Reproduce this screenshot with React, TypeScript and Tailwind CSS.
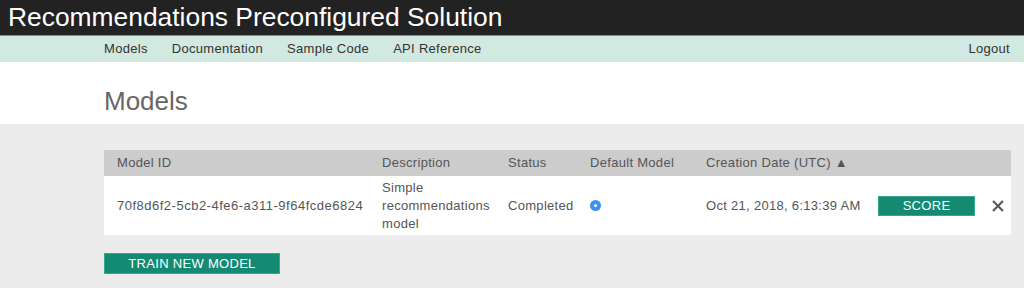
import React, { FC } from 'react'

const navLinks = ['Models', 'Documentation', 'Sample Code', 'API Reference']

const App: FC = () => {
  return (
    <div className="w-[1024px] h-[288px] overflow-hidden bg-[#ececec] font-['Liberation_Sans',Arial,sans-serif] text-[13px] tracking-[0.3px] text-[#555]">
      <div className="h-[36px] bg-[#222222] border-b border-[#888] flex items-center pl-[8px]">
        <span className="text-white text-[26.4px] leading-none tracking-normal">
          Recommendations Preconfigured Solution
        </span>
      </div>
      <div className="h-[26px] bg-[#d2e9e1] flex items-center pl-[104px] pr-[14px] text-[#333]">
        <div className="flex gap-[24px]">
          {navLinks.map((l) => (
            <span key={l}>{l}</span>
          ))}
        </div>
        <span className="ml-auto">Logout</span>
      </div>
      <div className="h-[62px] bg-white flex items-center pl-[104px]">
        <h1 className="text-[26px] text-[#666] leading-none mt-[16px] tracking-normal">Models</h1>
      </div>
      <div className="pl-[104px] pr-[13px] pt-[26px]">
        <div className="flex h-[26px] bg-[#cccccc] items-center">
          <div className="w-[278px] pl-[13px]">Model ID</div>
          <div className="w-[126px]">Description</div>
          <div className="w-[82px]">Status</div>
          <div className="w-[116px]">Default Model</div>
          <div className="w-[172px]">Creation Date (UTC) ▲</div>
        </div>
        <div className="flex h-[59px] bg-white items-center">
          <div className="w-[278px] pl-[13px] tracking-[0.5px]">70f8d6f2-5cb2-4fe6-a311-9f64fcde6824</div>
          <div className="w-[126px] leading-[18px]">
            Simple
            <br />
            recommendations
            <br />
            model
          </div>
          <div className="w-[82px]">Completed</div>
          <div className="w-[116px] flex items-center">
            <span className="w-[11px] h-[11px] rounded-full bg-[#3c90f2] flex items-center justify-center">
              <span className="w-[3px] h-[3px] rounded-full bg-white" />
            </span>
          </div>
          <div className="w-[172px]">Oct 21, 2018, 6:13:39 AM</div>
          <button className="w-[97px] h-[20px] bg-[#148a72] border border-[#3aa58c] text-white text-[13px] leading-none">
            SCORE
          </button>
          <svg className="ml-[17px]" width="12" height="12" viewBox="0 0 12 12">
            <path d="M1 1L11 11M11 1L1 11" stroke="#555" strokeWidth="2" />
          </svg>
        </div>
        <button className="mt-[18px] w-[176px] h-[21px] bg-[#148a72] border border-[#3aa58c] text-white text-[13px] leading-none">
          TRAIN NEW MODEL
        </button>
      </div>
    </div>
  )
}

export default App
